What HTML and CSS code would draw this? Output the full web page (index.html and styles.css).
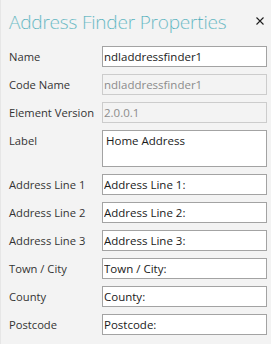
FILE: index.html
```html
<!DOCTYPE html>
<html lang="en">
<head>
    <meta charset="UTF-8">
    <meta name="viewport" content="width=device-width, initial-scale=1.0">
    <title>Address Finder Properties</title>
    <link rel="stylesheet" href="styles.css">
</head>
<body>
    <div class="panel">
        <div class="header">
            <h1>Address Finder Properties</h1>
            <svg class="close" width="8" height="8" viewBox="0 0 8 8">
                <path d="M0.5 0.5 L7.5 7.5 M7.5 0.5 L0.5 7.5" stroke="#1e1e1e" stroke-width="1.1" fill="none"/>
            </svg>
        </div>

        <form class="props">
            <label for="name">Name</label>
            <input type="text" id="name" value="ndladdressfinder1">

            <label for="codeName">Code Name</label>
            <input type="text" id="codeName" value="ndladdressfinder1" disabled>

            <label for="version">Element Version</label>
            <input type="text" id="version" value="2.0.0.1" disabled>

            <label for="label">Label</label>
            <textarea id="label">Home Address</textarea>

            <label for="line1">Address Line 1</label>
            <input type="text" id="line1" value="Address Line 1:">

            <label for="line2">Address Line 2</label>
            <input type="text" id="line2" value="Address Line 2:">

            <label for="line3">Address Line 3</label>
            <input type="text" id="line3" value="Address Line 3:">

            <label for="town">Town / City</label>
            <input type="text" id="town" value="Town / City:">

            <label for="county">County</label>
            <input type="text" id="county" value="County:">

            <label for="postcode">Postcode</label>
            <input type="text" id="postcode" value="Postcode:">
        </form>
    </div>
</body>
</html>
```

FILE: styles.css
```css
body {
    font-family: "Open Sans", "Noto Sans", sans-serif;
    margin: 0;
    background: #f3f3f3;
}
.panel {
    height: 344px;
    box-sizing: border-box;
    padding: 0 4px 0 8px;
    border-left: 1px solid #e6e6e6;
}
.header {
    display: flex;
    justify-content: space-between;
    align-items: center;
    height: 45px;
}
h1 {
    margin: 0 0 1px;
    font-size: 19px;
    font-weight: 300;
    letter-spacing: -0.2px;
    color: #3aa7b5;
    -webkit-text-stroke: 0.2px #f3f3f3;
}
.close {
    margin: 0 3px 4px 0;
}
.props {
    display: grid;
    grid-template-columns: 93px 165px;
    row-gap: 7px;
    margin-top: 1px;
}
.props label {
    font-size: 11.2px;
    color: #333;
    line-height: 21px;
}
.props input,
.props textarea {
    box-sizing: border-box;
    height: 21px;
    margin: 0;
    padding: 0 1px;
    border: 1px solid #a3a3a3;
    background: white;
    font-family: "Open Sans", "Noto Sans", sans-serif;
    font-size: 11.5px;
    color: #1a1a1a;
    outline: none;
}
.props textarea {
    height: 37px;
    padding: 2px 3px;
    resize: none;
    overflow: hidden;
}
.props input:disabled {
    background: #f3f3f3;
    border-color: #cccccc;
    color: #8c8c8c;
}
```
